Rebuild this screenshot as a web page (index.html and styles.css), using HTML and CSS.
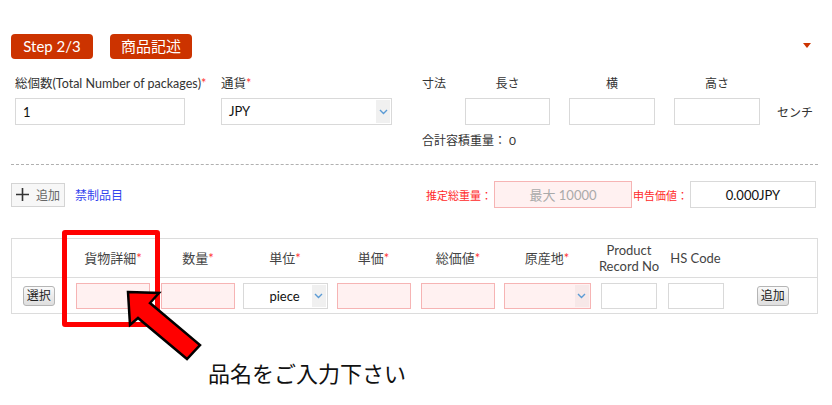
FILE: index.html
```html
<!DOCTYPE html>
<html lang="ja">
<head>
  <meta charset="UTF-8">
  <title>商品記述</title>
  <link rel="stylesheet" href="styles.css">
</head>
<body>
  <div class="page">
    <div class="step-bar">
      <span class="badge">Step 2/3</span>
      <span class="badge">商品記述</span>
      <span class="toggle"></span>
    </div>

    <div class="form-top">
      <div class="field field-qty">
        <label>総個数(Total Number of packages)<em>*</em></label>
        <input class="text" type="text" value="1">
      </div>
      <div class="field field-cur">
        <label>通貨<em>*</em></label>
        <div class="select">
          <span class="select-value">JPY</span>
          <span class="chev"><svg width="9" height="6" viewBox="0 0 9 6"><path d="M1 1l3.5 3.5L8 1" fill="none" stroke="#5b9bd5" stroke-width="1.4"/></svg></span>
        </div>
      </div>
      <div class="dims">
        <span class="dim-title">寸法</span>
        <span class="dim-label">長さ</span>
        <span class="dim-label">横</span>
        <span class="dim-label">高さ</span>
        <span></span>
        <span></span>
        <input class="text" type="text">
        <input class="text" type="text">
        <input class="text" type="text">
        <span class="unit">センチ</span>
        <div class="vol">合計容積重量： 0</div>
      </div>
    </div>

    <div class="dash"></div>

    <div class="toolbar">
      <button class="add-btn">
        <svg width="13" height="13" viewBox="0 0 13 13"><path d="M6.5 0v13M0 6.5h13" stroke="#333" stroke-width="1.6"/></svg>
        追加
      </button>
      <a class="link" href="#">禁制品目</a>
      <div class="totals">
        <span class="warn">推定総重量：</span>
        <input class="text pink weight" type="text" placeholder="最大 10000">
        <span class="warn">申告価値：</span>
        <input class="text value" type="text" value="0.000JPY">
      </div>
    </div>

    <table class="items">
      <colgroup>
        <col class="c-pick"><col class="c-desc"><col class="c-qty"><col class="c-unit"><col class="c-price">
        <col class="c-total"><col class="c-origin"><col class="c-record"><col class="c-hs"><col class="c-add">
      </colgroup>
      <thead>
        <tr>
          <th></th>
          <th>貨物詳細<em>*</em></th>
          <th>数量<em>*</em></th>
          <th>単位<em>*</em></th>
          <th>単価<em>*</em></th>
          <th>総価値<em>*</em></th>
          <th>原産地<em>*</em></th>
          <th>Product<br>Record No</th>
          <th>HS Code</th>
          <th></th>
        </tr>
      </thead>
      <tbody>
        <tr>
          <td class="pick"><button class="small-btn">選択</button></td>
          <td><input class="text pink cell" type="text"></td>
          <td><input class="text pink cell" type="text"></td>
          <td>
            <div class="select cell-select">
              <span class="select-value center">piece</span>
              <span class="chev"><svg width="9" height="6" viewBox="0 0 9 6"><path d="M1 1l3.5 3.5L8 1" fill="none" stroke="#5b9bd5" stroke-width="1.4"/></svg></span>
            </div>
          </td>
          <td><input class="text pink cell" type="text"></td>
          <td><input class="text pink cell" type="text"></td>
          <td>
            <div class="select cell-select pink origin">
              <span class="select-value"></span>
              <span class="chev"><svg width="9" height="6" viewBox="0 0 9 6"><path d="M1 1l3.5 3.5L8 1" fill="none" stroke="#5b9bd5" stroke-width="1.4"/></svg></span>
            </div>
          </td>
          <td><input class="text cell short" type="text"></td>
          <td><input class="text cell short" type="text"></td>
          <td><button class="small-btn">追加</button></td>
        </tr>
      </tbody>
    </table>

    <p class="hint">品名をご入力下さい</p>

    <div class="focus-box"></div>
    <svg class="arrow" width="90" height="82" viewBox="0 0 90 82">
      <polygon points="8,7 39,8 30,18 80,60 67,74 18,33 10,40" fill="#ff0000" stroke="#000" stroke-width="2.5" stroke-linejoin="miter"/>
    </svg>
  </div>
</body>
</html>
```

FILE: styles.css
```css
body {
  margin: 0;
  background: #fff;
  font-family: Lato, "Noto Sans CJK JP", sans-serif;
  font-size: 12px;
  font-variant-numeric: lining-nums;
  color: #333;
}
.page {
  position: relative;
  padding: 34px 15px 0 11px;
}
em {
  font-style: normal;
  color: #ff3333;
}

/* step header */
.step-bar {
  display: flex;
  align-items: center;
  gap: 17px;
}
.badge {
  width: 82px;
  height: 25px;
  line-height: 25px;
  text-align: center;
  background: #cc3300;
  color: #fff;
  font-size: 15px;
  border-radius: 4px;
}
.toggle {
  margin-left: auto;
  margin-right: 6px;
  margin-top: -2px;
  border-left: 4px solid transparent;
  border-right: 4px solid transparent;
  border-top: 5px solid #cc3300;
}

/* top form */
.form-top {
  display: flex;
  padding-left: 4px;
  margin-top: 17px;
}
.field label {
  display: block;
  line-height: 16px;
  margin-bottom: 6px;
  white-space: nowrap;
  font-size: 12.5px;
}
.field-qty {
  width: 170px;
  margin-right: 36px;
}
.field-cur {
  width: 171px;
  margin-right: 30px;
}
.text {
  box-sizing: border-box;
  height: 27px;
  border: 1px solid #d9d9d9;
  background: #fff;
  font-family: inherit;
  font-size: 13px;
  font-variant-numeric: lining-nums;
  color: #111;
  padding: 0 7px;
  outline: none;
}
.field .text {
  width: 100%;
}
.select {
  box-sizing: border-box;
  height: 27px;
  border: 1px solid #d9d9d9;
  background: #fff;
  display: flex;
  align-items: stretch;
}
.select-value {
  flex: 1;
  line-height: 25px;
  padding-left: 7px;
  color: #111;
  font-size: 13px;
}
.select-value.center {
  text-align: center;
  padding-left: 14px;
}
.chev {
  width: 14px;
  margin: 1px 1px 1px 0;
  background: #f0f0f0;
  display: flex;
  align-items: center;
  justify-content: center;
}
.dims {
  display: grid;
  grid-template-columns: 24px 85px 86px 86px auto;
  column-gap: 19px;
  row-gap: 6px;
  align-items: center;
}
.dim-title,
.dim-label {
  line-height: 16px;
  white-space: nowrap;
}
.dim-label {
  text-align: center;
}
.dims .text {
  width: 100%;
}
.unit {
  margin-left: -2px;
}
.vol {
  grid-column: 1 / -1;
  margin-top: 2px;
  line-height: 16px;
}

.dash {
  border-top: 1px dashed #b0b0b0;
  margin: 15px -1px 0 0;
}

/* totals toolbar */
.toolbar {
  display: flex;
  align-items: center;
  margin-top: 16px;
  height: 27px;
}
.add-btn {
  box-sizing: border-box;
  width: 54px;
  height: 24px;
  border: 1px solid #d4d4d4;
  background: #f7f7f7;
  color: #666;
  font-family: inherit;
  font-size: 12px;
  padding: 0;
  display: flex;
  align-items: center;
  justify-content: center;
  gap: 7px;
}
.link {
  margin-left: 10px;
  color: #3344ee;
  text-decoration: none;
}
.totals {
  margin-left: auto;
  margin-right: 1px;
  display: flex;
  align-items: center;
}
.warn {
  color: #ff2a2a;
  font-size: 11px;
}
.pink {
  background: #fff1f1;
  border-color: #f6b4b4;
}
.weight {
  width: 138px;
  margin-left: 2px;
  margin-right: 1px;
  text-align: center;
  color: #aaa;
}
.weight::placeholder {
  color: #aaa;
}
.value {
  width: 126px;
  margin-left: 2px;
  text-align: center;
}

/* item table */
.items {
  margin-top: 30px;
  width: 806px;
  table-layout: fixed;
  border-collapse: collapse;
  border: 1px solid #dcdcdc;
}
.c-pick { width: 59px; }
.c-desc { width: 85px; }
.c-qty { width: 85px; }
.c-unit { width: 89px; }
.c-price { width: 88px; }
.c-total { width: 81px; }
.c-origin { width: 97px; }
.c-record { width: 67px; }
.c-hs { width: 66px; }
.c-add { width: 89px; }
.items th {
  height: 38px;
  font-weight: normal;
  font-size: 13px;
  color: #444;
  line-height: 16px;
  padding: 0;
  border-bottom: 1px solid #dcdcdc;
}
.items td {
  height: 35px;
  padding: 0;
  text-align: center;
}
.cell {
  width: 74px;
  height: 26px;
  vertical-align: middle;
}
.cell.short {
  width: 56px;
}
.cell-select {
  width: 85px;
  height: 26px;
  margin: 0 auto;
}
.cell-select .select-value {
  line-height: 24px;
}
.origin {
  width: 87px;
}
.origin .chev {
  background: #f7e8e8;
}
.pick {
  padding-right: 5px !important;
}
.small-btn {
  box-sizing: border-box;
  height: 20px;
  padding: 0 3px;
  border: 1px solid #b5b5b5;
  border-radius: 3px;
  background: linear-gradient(#fafafa, #dedede);
  font-family: inherit;
  font-size: 12px;
  color: #222;
  line-height: 18px;
}

/* annotation */
.hint {
  margin: 45px 0 0 197px;
  font-size: 22px;
  line-height: 30px;
  color: #111;
}
.focus-box {
  position: absolute;
  left: 62px;
  top: 230px;
  width: 88px;
  height: 87px;
  border: 5px solid #ff0000;
  border-radius: 3px;
}
.arrow {
  position: absolute;
  left: 120px;
  top: 285px;
}
```
